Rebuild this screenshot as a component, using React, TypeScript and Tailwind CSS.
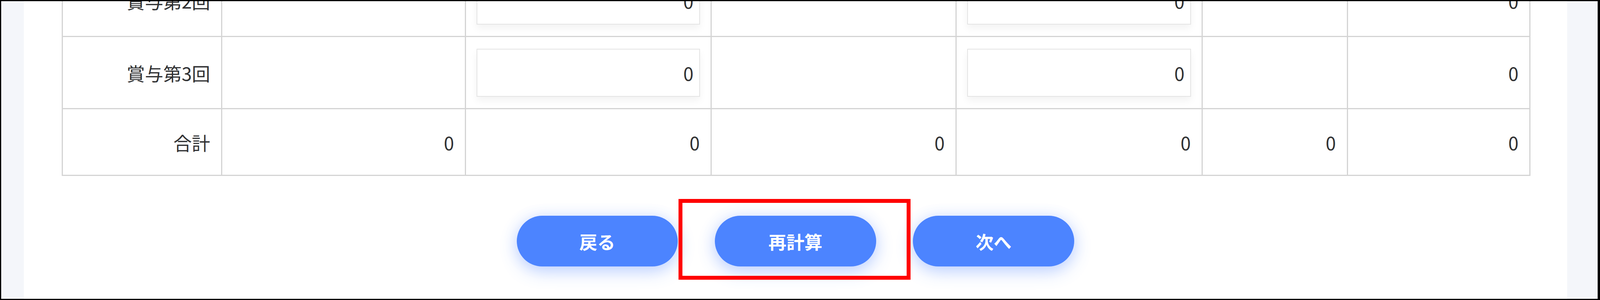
import React from "react";

const FONT = { fontFamily: '"Noto Sans CJK JP", "Noto Sans", sans-serif' };

function Cell({ children, input }: { children?: React.ReactNode; input?: boolean }) {
  if (input) {
    return (
      <div className="bg-white flex items-center px-[27px] min-w-0">
        <input
          readOnly
          value={String(children ?? "")}
          className="w-full min-w-0 h-[123px] border-2 border-[#e4e4e4] bg-white text-right pr-[15px] text-[47px] leading-none text-[#303133] shadow-[0_10px_18px_rgba(0,0,0,0.05)] outline-none"
        />
      </div>
    );
  }
  return (
    <div className="bg-white flex items-center justify-end pr-[28px] min-w-0 text-[47px] leading-none text-[#303133]">
      {children}
    </div>
  );
}

export default function App() {
  const rows = ["賞与第2回", "賞与第3回"];
  return (
    <div
      style={FONT}
      className="relative w-full h-[769px] overflow-hidden bg-[#f4f6fa] border-black border-t-[3px] border-l-[3px] border-b-[3px] border-r-[6px]"
    >
      <div className="ml-[1.41%] w-[96.68%] h-full bg-white overflow-hidden">
        <div className="-mt-[96px] pl-[2.469%]">
          <div className="w-[97.57%] bg-[#d4d4d4] p-[3px] grid grid-cols-[436fr_669fr_674fr_672fr_675fr_397fr_500fr] gap-[3px]">
            {rows.map((label) => (
              <React.Fragment key={label}>
                <div className="h-[182px] bg-white flex items-center justify-end pr-[28px] min-w-0 text-[47px] leading-none text-[#303133]">
                  {label}
                </div>
                <Cell />
                <Cell input>0</Cell>
                <Cell />
                <Cell input>0</Cell>
                <Cell />
                <Cell>0</Cell>
              </React.Fragment>
            ))}
            <div className="h-[168px] bg-white flex items-center justify-end pr-[28px] min-w-0 text-[47px] leading-none text-[#303133]">
              合計
            </div>
            <Cell>0</Cell>
            <Cell>0</Cell>
            <Cell>0</Cell>
            <Cell>0</Cell>
            <Cell>0</Cell>
            <Cell>0</Cell>
          </div>
        </div>
        <div className="mt-[102px] flex justify-center gap-[2.4%]">
          {["戻る", "再計算", "次へ"].map((t) => (
            <button
              key={t}
              className="w-[10.44%] h-[130px] rounded-full bg-[#4c84ff] text-white text-[46px] font-bold leading-none shadow-[0_14px_44px_rgba(70,125,255,0.3),0_0_36px_rgba(70,125,255,0.12)]"
            >
              {t}
            </button>
          ))}
        </div>
      </div>
      <div className="absolute left-[42.42%] top-[507px] w-[14.53%] h-[207px] border-[10px] border-[#ff0000]" />
    </div>
  );
}
